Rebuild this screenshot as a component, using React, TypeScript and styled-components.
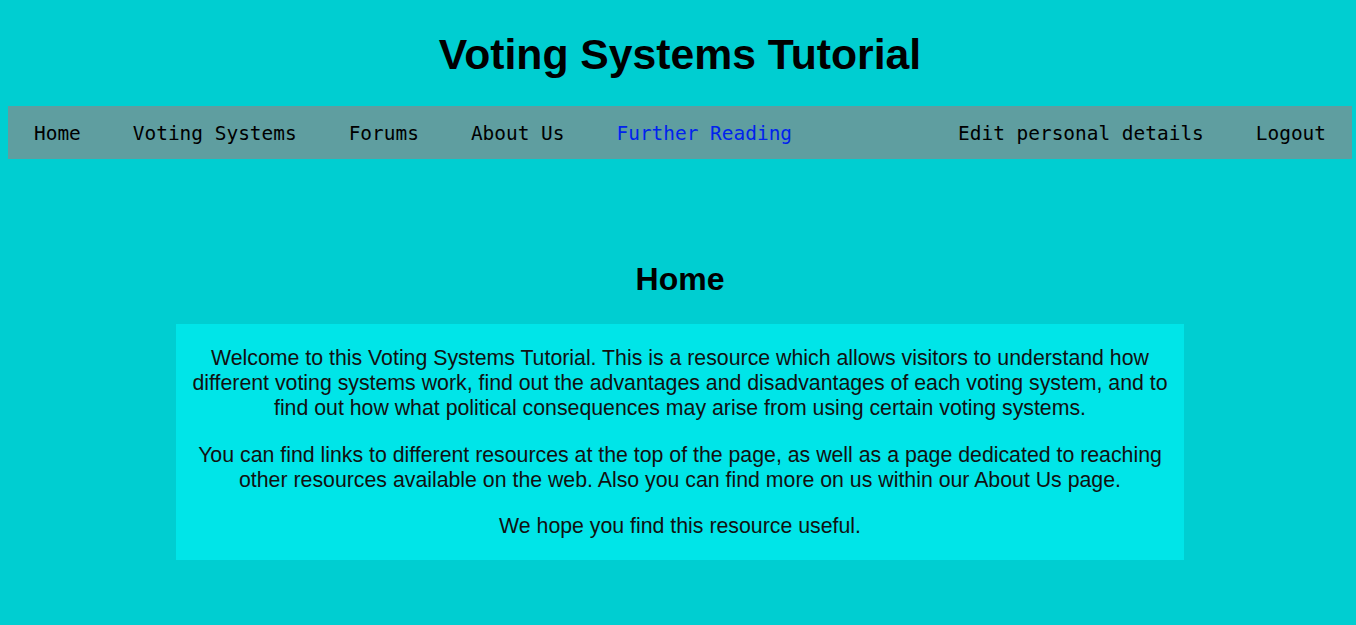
import React from 'react';
import styled, { createGlobalStyle } from 'styled-components';

const GlobalStyle = createGlobalStyle`
  body {
    margin: 8px 4px 8px 8px;
    background: #00ced1;
    font-family: "Liberation Sans", Arial, sans-serif;
  }
`;

const Title = styled.h1`
  margin: 0;
  height: 98px;
  padding-bottom: 6px;
  box-sizing: border-box;
  display: flex;
  align-items: center;
  justify-content: center;
  font-size: 42.7px;
  font-weight: bold;
  color: #000;
`;

const NavBar = styled.nav`
  display: flex;
  align-items: center;
  height: 53px;
  padding-top: 1px;
  box-sizing: border-box;
  background: #5f9ea0;
`;

const NavGroup = styled.div<{ $right?: boolean }>`
  display: flex;
  margin-left: ${(p) => (p.$right ? 'auto' : '0')};
`;

const NavLink = styled.a<{ $active?: boolean }>`
  padding: 0 26px;
  font-family: "DejaVu Sans Mono", "Liberation Mono", monospace;
  font-size: 19.45px;
  color: ${(p) => (p.$active ? '#0022ee' : '#000')};
  text-decoration: none;
  cursor: pointer;
`;

const Main = styled.main`
  padding-top: 100px;
`;

const Heading = styled.h2`
  margin: 0 0 25px;
  text-align: center;
  font-size: 32px;
  font-weight: bold;
  line-height: 40px;
`;

const Panel = styled.section`
  width: 1008px;
  margin: 0 auto;
  box-sizing: border-box;
  padding: 22px 12px 21px;
  background: #00e5e8;
  text-align: center;
`;

const Para = styled.p`
  margin: 0 0 21.5px;
  font-size: 21.3px;
  line-height: 25px;
  color: #111;
  &:last-child {
    margin-bottom: 0;
  }
`;

const leftLinks = ['Home', 'Voting Systems', 'Forums', 'About Us', 'Further Reading'];
const rightLinks = ['Edit personal details', 'Logout'];

export default function App() {
  return (
    <>
      <GlobalStyle />
      <Title>Voting Systems Tutorial</Title>
      <NavBar>
        <NavGroup>
          {leftLinks.map((l) => (
            <NavLink key={l} $active={l === 'Further Reading'}>
              {l}
            </NavLink>
          ))}
        </NavGroup>
        <NavGroup $right>
          {rightLinks.map((l) => (
            <NavLink key={l}>{l}</NavLink>
          ))}
        </NavGroup>
      </NavBar>
      <Main>
        <Heading>Home</Heading>
        <Panel>
          <Para>
            Welcome to this Voting Systems Tutorial. This is a resource which allows visitors to
            understand how different voting systems work, find out the advantages and
            disadvantages of each voting system, and to find out how what political consequences
            may arise from using certain voting systems.
          </Para>
          <Para>
            You can find links to different resources at the top of the page, as well as a page
            dedicated to reaching other resources available on the web. Also you can find more on
            us within our About Us page.
          </Para>
          <Para>We hope you find this resource useful.</Para>
        </Panel>
      </Main>
    </>
  );
}
